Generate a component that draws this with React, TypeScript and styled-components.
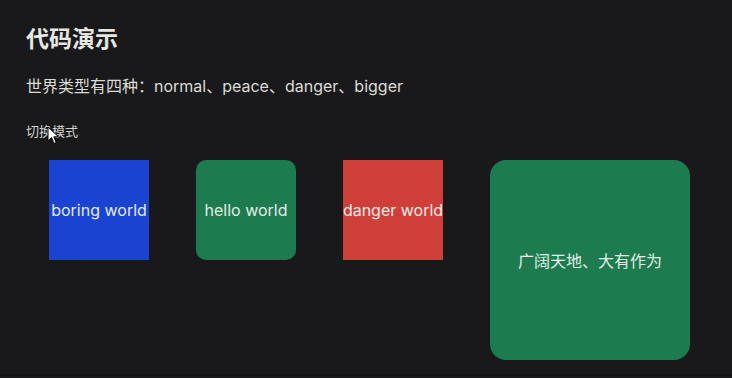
import React from "react";
import styled, { createGlobalStyle } from "styled-components";

const Global = createGlobalStyle`
  html, body {
    margin: 0;
    padding: 0;
    background: #19191b;
  }
  body {
    font-family: Inter, "Noto Sans CJK SC", sans-serif;
    color: #dfdfd8;
  }
`;

const Page = styled.div`
  width: 732px;
  height: 376px;
  box-sizing: border-box;
  padding: 23px 26px 0;
  border-bottom: 2px solid #141416;
  overflow: hidden;
`;

const Title = styled.h2`
  margin: 0;
  font-size: 23px;
  line-height: 32px;
  font-weight: 700;
  color: #e6e6e2;
`;

const Desc = styled.p`
  margin: 19px 0 0;
  font-size: 16px;
  line-height: 24px;
  color: #dcdcd6;
`;

const ToggleWrap = styled.div`
  position: relative;
  margin-top: 22px;
  height: 20px;
`;

const Toggle = styled.button`
  background: none;
  border: none;
  padding: 0;
  font-family: Inter, "Noto Sans CJK SC", sans-serif;
  font-size: 13px;
  line-height: 20px;
  color: #d2d2cd;
  cursor: pointer;
`;

const Cursor = styled.svg`
  position: absolute;
  left: 21px;
  top: 6px;
`;

const Row = styled.div`
  display: flex;
  align-items: flex-start;
  gap: 47px;
  margin-top: 20px;
  padding-left: 23px;
`;

type Variant = "normal" | "peace" | "danger" | "bigger";

const colors: Record<Variant, string> = {
  normal: "#1a43d1",
  peace: "#1c7b4f",
  danger: "#cf3f3a",
  bigger: "#1c7b4f",
};

const World = styled.div<{ $v: Variant }>`
  display: flex;
  align-items: center;
  justify-content: center;
  width: ${(p) => (p.$v === "bigger" ? "200px" : "100px")};
  height: ${(p) => (p.$v === "bigger" ? "200px" : "100px")};
  border-radius: ${(p) =>
    p.$v === "bigger" ? "16px" : p.$v === "peace" ? "10px" : "0"};
  background: ${(p) => colors[p.$v]};
  color: #e4ede6;
  font-size: 16px;
  white-space: nowrap;
  flex: none;
`;

export default function App() {
  return (
    <>
      <Global />
      <Page>
        <Title>代码演示</Title>
        <Desc>世界类型有四种：normal、peace、danger、bigger</Desc>
        <ToggleWrap>
          <Toggle>切换模式</Toggle>
          <Cursor width="13" height="19" viewBox="0 0 13 19">
            <path
              d="M1 1 L1 15 L4.5 11.5 L7 17.5 L9.2 16.6 L6.8 10.8 L11.5 10.8 Z"
              fill="#ffffff"
              stroke="#000000"
              strokeWidth="1"
              strokeLinejoin="round"
            />
          </Cursor>
        </ToggleWrap>
        <Row>
          <World $v="normal">boring world</World>
          <World $v="peace">hello world</World>
          <World $v="danger">danger world</World>
          <World $v="bigger">广阔天地、大有作为</World>
        </Row>
      </Page>
    </>
  );
}
